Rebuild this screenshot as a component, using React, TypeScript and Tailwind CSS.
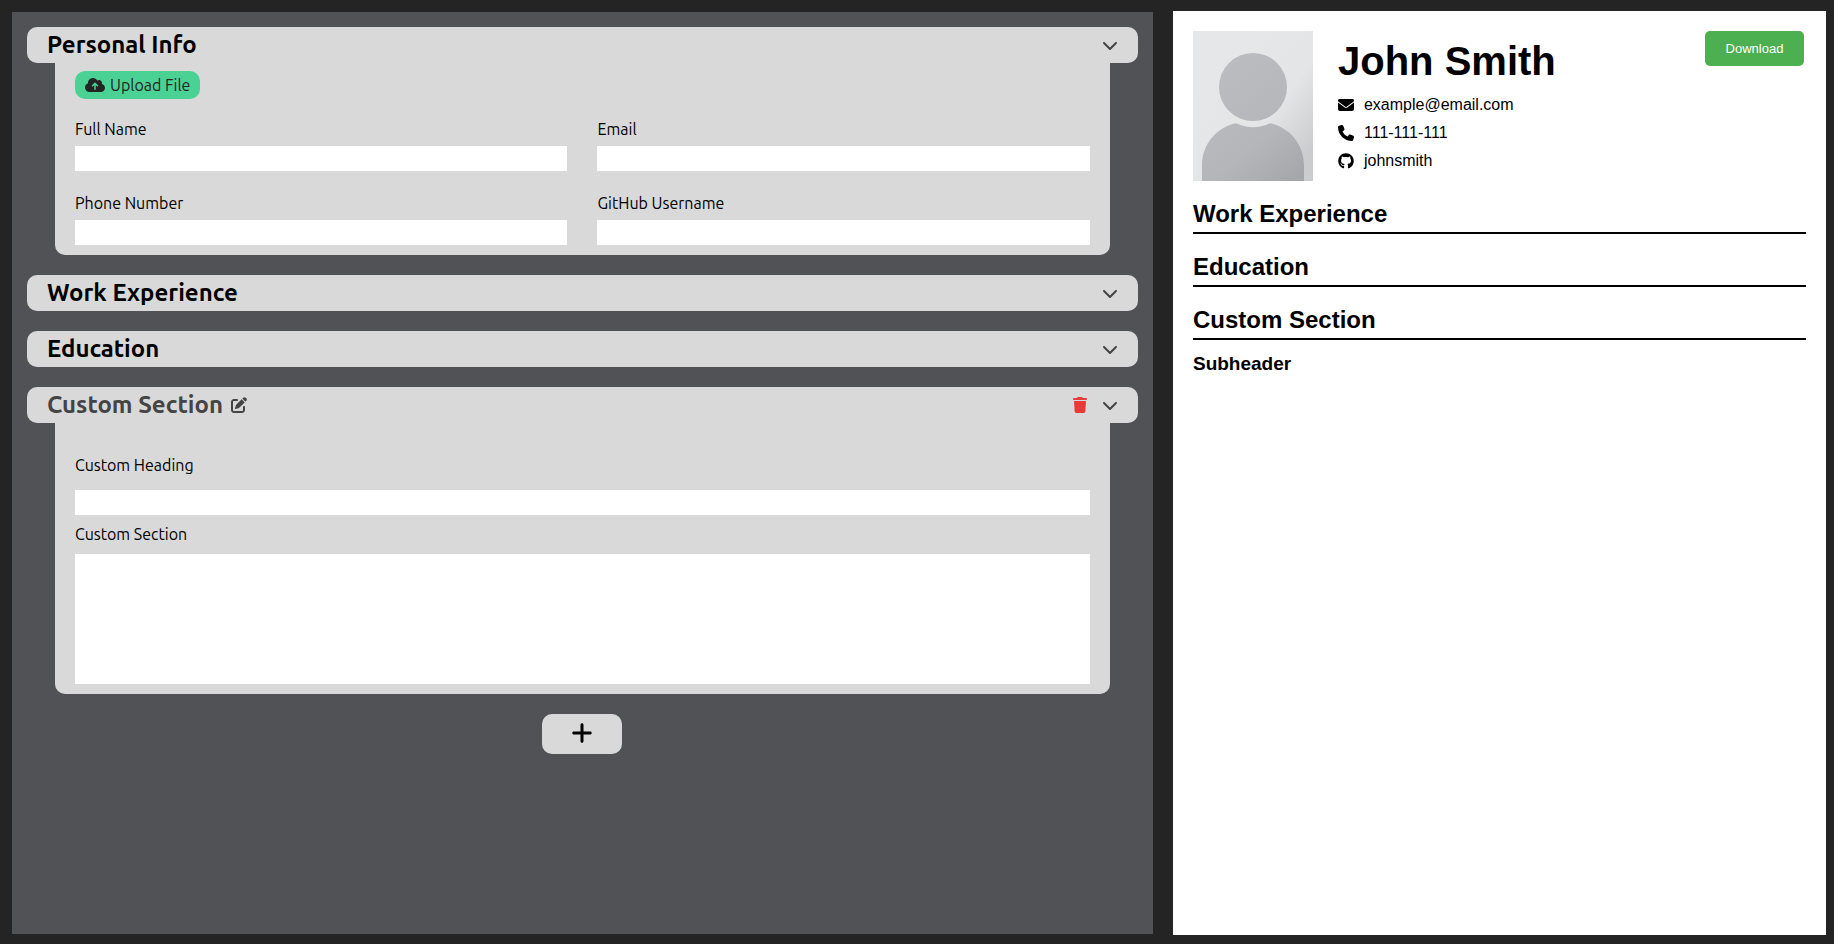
import { useState } from 'react';
import type { ReactNode } from 'react';
import {
  FaChevronDown,
  FaCloudArrowUp,
  FaEnvelope,
  FaGithub,
  FaPenToSquare,
  FaPhone,
  FaPlus,
  FaTrash,
} from 'react-icons/fa6';

function SectionHeader({
  title,
  custom = false,
  onToggle,
}: {
  title: string;
  custom?: boolean;
  onToggle: () => void;
}) {
  return (
    <header className="flex h-9 items-center rounded-[10px] bg-[#d9d9d9] px-5 text-[#444444]">
      <h2
        className={
          custom
            ? 'text-2xl leading-8 font-bold text-[#444444]'
            : 'text-2xl leading-8 font-bold text-black'
        }
      >
        {title}
      </h2>
      {custom && (
        <button type="button" aria-label="Rename section" className="ml-2">
          <FaPenToSquare size={16} />
        </button>
      )}
      <div className="ml-auto flex items-center gap-3.5">
        {custom && (
          <button type="button" aria-label="Delete section" className="text-[#e93a3a]">
            <FaTrash size={16} />
          </button>
        )}
        <button type="button" aria-label={`Toggle ${title}`} onClick={onToggle}>
          <FaChevronDown size={16} />
        </button>
      </div>
    </header>
  );
}

function Section({
  title,
  custom,
  startOpen = false,
  children,
}: {
  title: string;
  custom?: boolean;
  startOpen?: boolean;
  children?: ReactNode;
}) {
  const [open, setOpen] = useState(startOpen);
  return (
    <section>
      <SectionHeader title={title} custom={custom} onToggle={() => setOpen(!open)} />
      {open && children && (
        <div className="mx-7 rounded-b-[10px] bg-[#d9d9d9] px-5 pb-2.5">{children}</div>
      )}
    </section>
  );
}

function Field({ id, label, type = 'text' }: { id: string; label: string; type?: string }) {
  return (
    <div className="flex flex-col gap-[7px]">
      <label htmlFor={id} className="text-base leading-5">
        {label}
      </label>
      <input id={id} type={type} className="h-[25px] w-full bg-white px-1 outline-none" />
    </div>
  );
}

function Avatar() {
  return (
    <svg viewBox="0 0 120 150" className="h-[150px] w-[120px] shrink-0" role="img" aria-label="Profile">
      <defs>
        <linearGradient id="backdrop" gradientUnits="userSpaceOnUse" x1="20" y1="30" x2="125" y2="110">
          <stop offset="0" stopColor="#e6e7e9" />
          <stop offset="0.6" stopColor="#e4e5e7" />
          <stop offset="1" stopColor="#cbccce" />
        </linearGradient>
        <linearGradient id="figure" gradientUnits="userSpaceOnUse" x1="20" y1="30" x2="115" y2="150">
          <stop offset="0" stopColor="#bcbdc0" />
          <stop offset="0.6" stopColor="#b5b6b9" />
          <stop offset="1" stopColor="#a3a4a7" />
        </linearGradient>
      </defs>
      <rect width="120" height="150" fill="url(#backdrop)" />
      <circle cx="60" cy="56" r="34" fill="url(#figure)" />
      <path
        d="M9 150V134C9 113 24 96 43 92.200A40 40 0 0 0 77 92.200C96 96 111 113 111 134V150Z"
        fill="url(#figure)"
      />
    </svg>
  );
}

function PreviewSection({ title, children }: { title: string; children?: ReactNode }) {
  return (
    <section className="flex flex-col gap-3">
      <h2 className="border-b-2 border-black pb-1 text-2xl leading-7 font-bold">{title}</h2>
      {children}
    </section>
  );
}

function Contact({ icon, children }: { icon: ReactNode; children: ReactNode }) {
  return (
    <li className="flex items-center gap-2.5 text-base leading-[18px]">
      {icon}
      <span>{children}</span>
    </li>
  );
}

export default function App() {
  return (
    <div className="grid min-h-screen grid-cols-[63.6fr_36.4fr] gap-5 bg-[#242424] pt-[11px] pr-2 pb-[9px] pl-3 text-black">
      <main className="mt-px mb-px flex flex-col gap-5 bg-[#515256] p-[15px] font-['Ubuntu','Noto_Sans',sans-serif]">
        <Section title="Personal Info" startOpen>
          <div className="pt-2">
            <label
              htmlFor="photo"
              className="inline-flex h-7 cursor-pointer items-center gap-[5px] rounded-[10px] bg-[#4ad295] px-2.5 align-top text-base text-[#242424]"
            >
              <FaCloudArrowUp size={16} className="w-5" />
              Upload File
            </label>
            <input id="photo" type="file" className="hidden" />
          </div>
          <div className="mt-5 grid grid-cols-2 gap-x-[30px] gap-y-[22px]">
            <Field id="name" label="Full Name" />
            <Field id="email" label="Email" type="email" />
            <Field id="phone" label="Phone Number" type="tel" />
            <Field id="github" label="GitHub Username" />
          </div>
        </Section>
        <Section title="Work Experience" />
        <Section title="Education" />
        <Section title="Custom Section" custom startOpen>
          <div className="flex flex-col pt-8">
            <label htmlFor="heading" className="text-base leading-5">
              Custom Heading
            </label>
            <input id="heading" type="text" className="mt-[15px] h-[25px] bg-white px-1 outline-none" />
            <label htmlFor="content" className="mt-[9px] text-base leading-5">
              Custom Section
            </label>
            <textarea
              id="content"
              className="mt-2.5 h-[130px] resize-none bg-white p-1 outline-none"
            />
          </div>
        </Section>
        <button
          type="button"
          aria-label="Add section"
          className="flex h-10 w-20 items-center justify-center self-center rounded-[10px] bg-[#d9d9d9] pb-0.5"
        >
          <FaPlus size={24} />
        </button>
      </main>

      <article className="bg-white p-5 font-['Liberation_Sans',Arial,sans-serif]">
        <div className="flex items-start">
          <Avatar />
          <div className="ml-[25px] pt-[7px]">
            <h1 className="text-[40px] leading-[46px] font-bold">John Smith</h1>
            <ul className="mt-3 flex flex-col gap-2.5">
              <Contact icon={<FaEnvelope size={16} />}>example@email.com</Contact>
              <Contact icon={<FaPhone size={16} />}>111-111-111</Contact>
              <Contact icon={<FaGithub className="h-4 w-auto" />}>johnsmith</Contact>
            </ul>
          </div>
          <button
            type="button"
            className="mr-0.5 ml-auto h-[35px] min-w-[99px] rounded-[5px] bg-[#4caf50] px-5 text-[13px] text-white"
          >
            Download
          </button>
        </div>
        <div className="mt-[19px] flex flex-col gap-[19px]">
          <PreviewSection title="Work Experience" />
          <PreviewSection title="Education" />
          <PreviewSection title="Custom Section">
            <h3 className="text-[19px] leading-6 font-bold">Subheader</h3>
          </PreviewSection>
        </div>
      </article>
    </div>
  );
}
